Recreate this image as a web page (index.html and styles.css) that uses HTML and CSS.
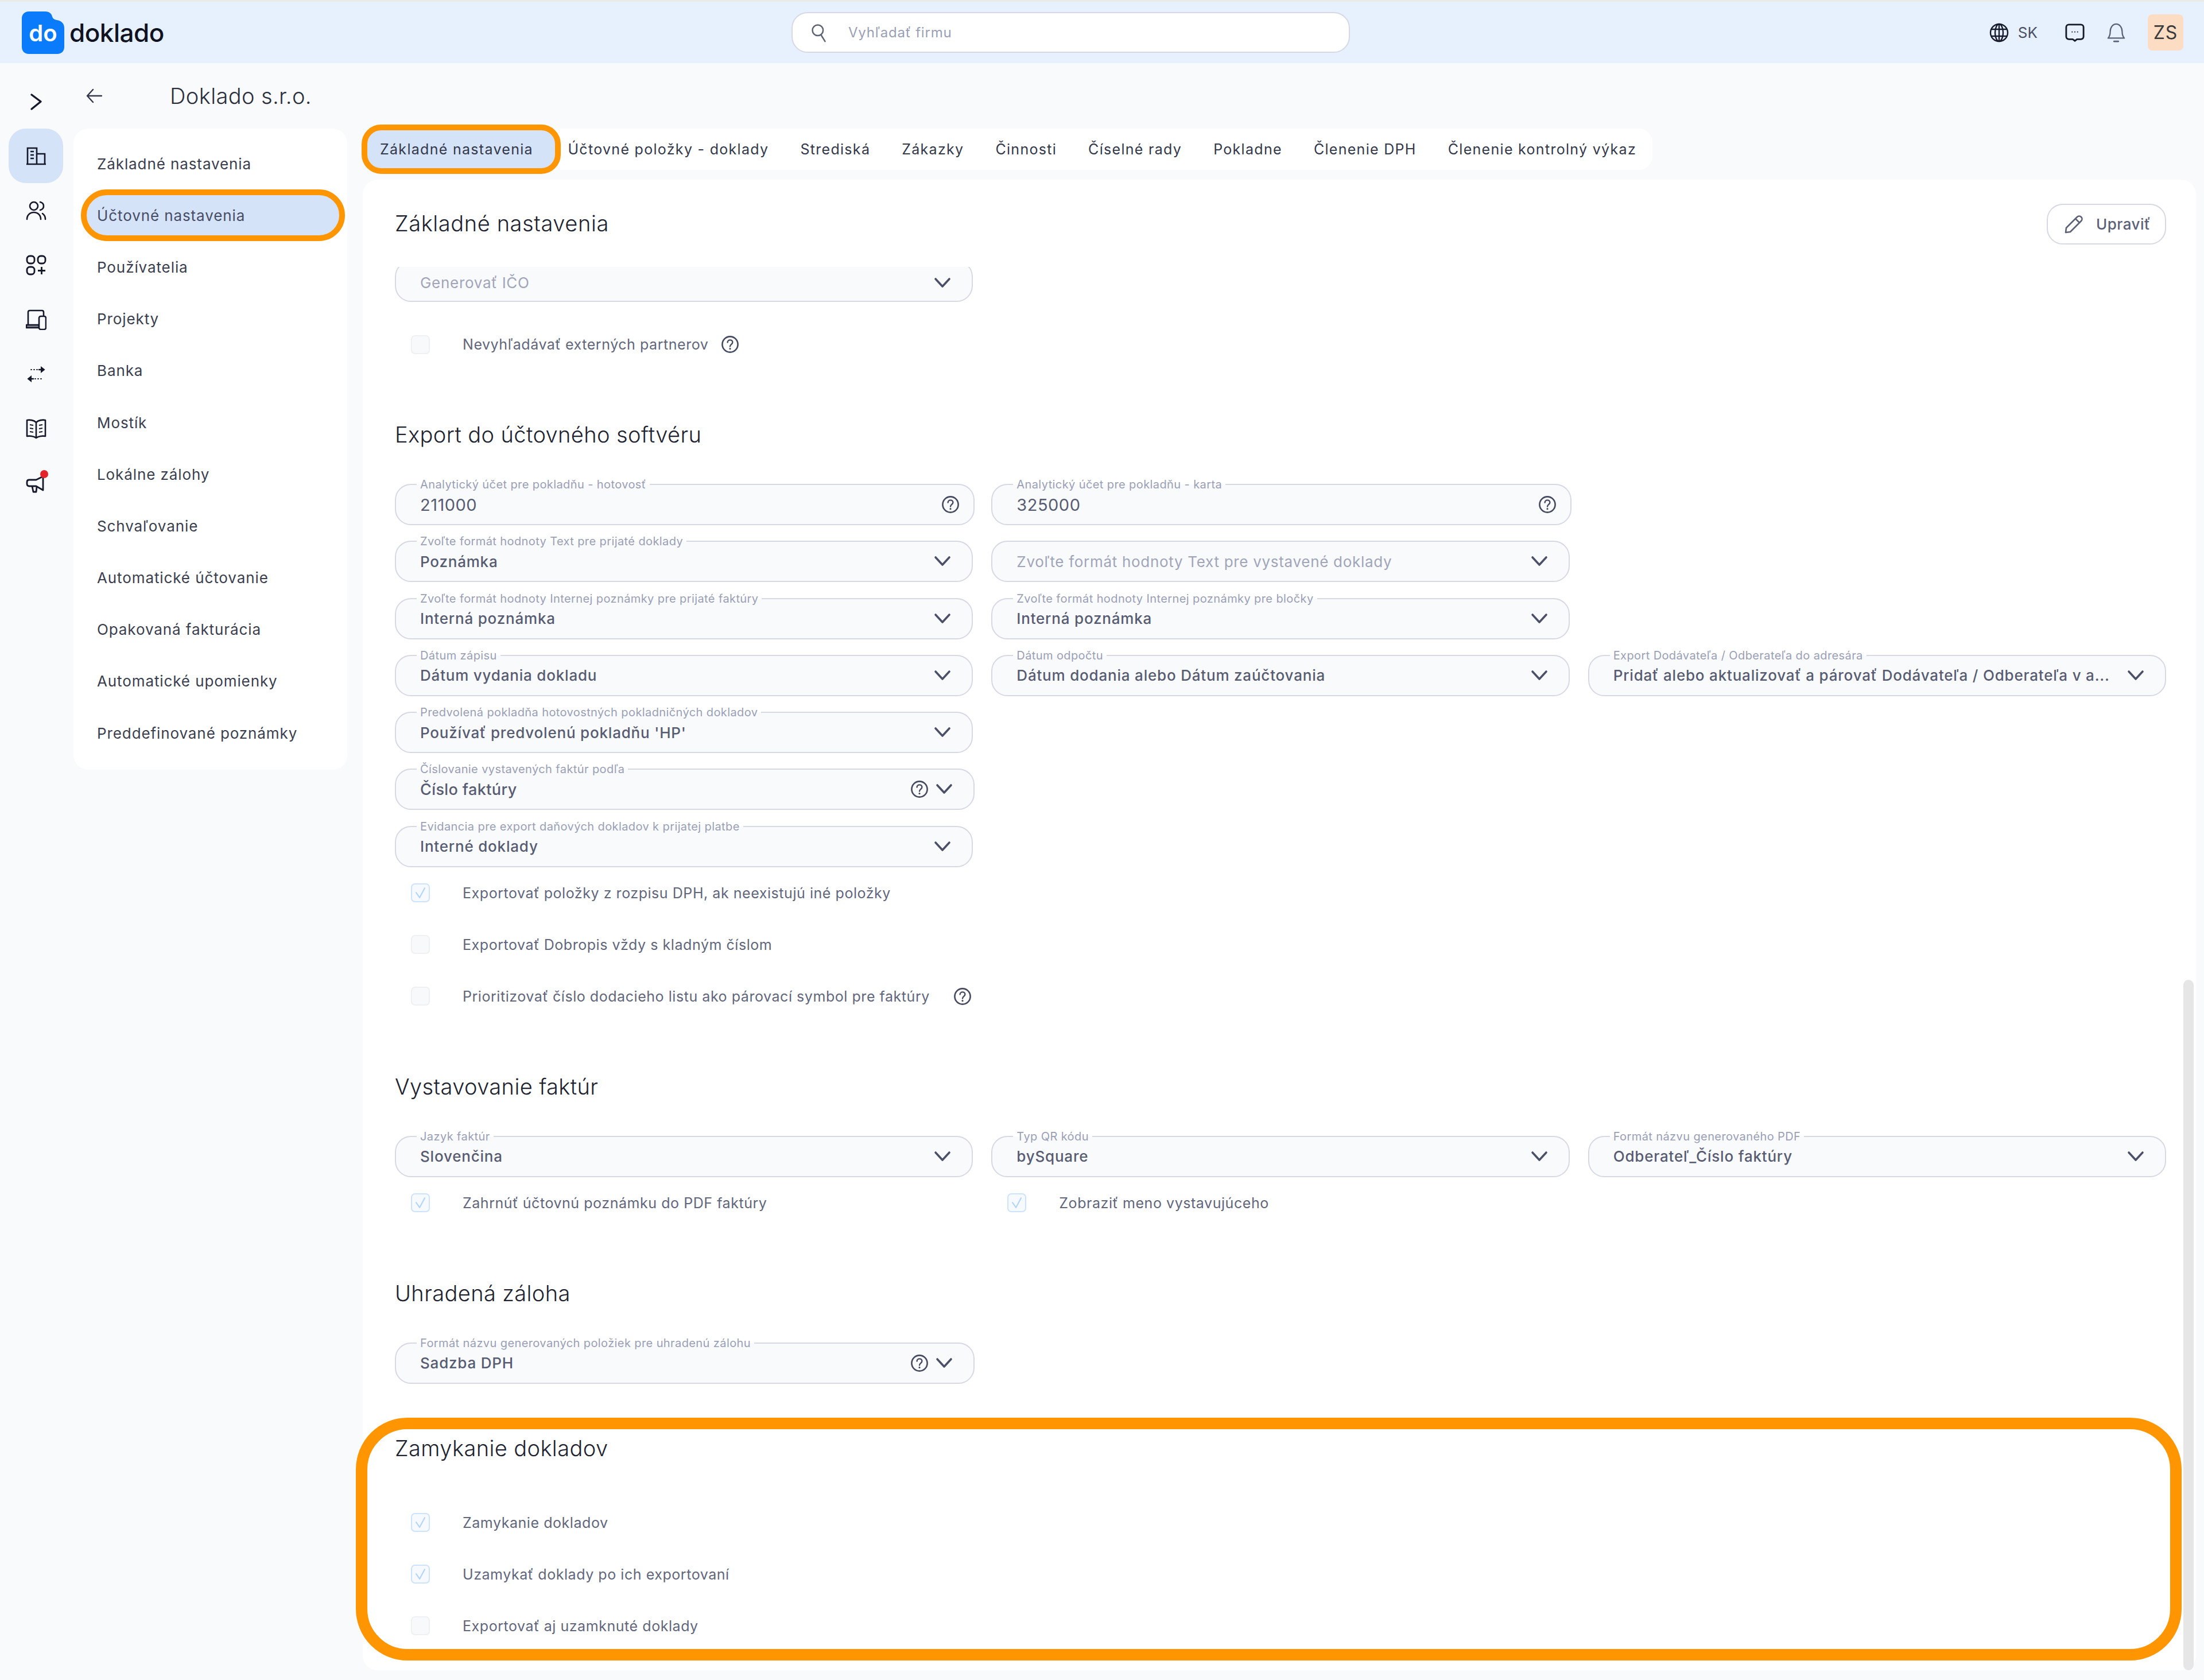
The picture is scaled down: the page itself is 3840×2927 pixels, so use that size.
FILE: index.html
```html
<!DOCTYPE html>
<html lang="sk">
<head>
  <meta charset="UTF-8">
  <title>Doklado - Účtovné nastavenia</title>
  <link rel="stylesheet" href="styles.css">
</head>
<body>
  <!-- icon sprite -->
  <svg class="sprite" xmlns="http://www.w3.org/2000/svg">
    <symbol id="i-chev" viewBox="0 0 30 20"><path d="M3 3l12 13L27 3" fill="none" stroke="currentColor" stroke-width="3.6" stroke-linecap="round" stroke-linejoin="round"/></symbol>
    <symbol id="i-help" viewBox="0 0 32 32"><circle cx="16" cy="16" r="13.6" fill="none" stroke="currentColor" stroke-width="2.6"/><path d="M11.6 12.6c0-2.6 2-4.2 4.4-4.2s4.4 1.6 4.4 3.9c0 3.5-4.4 3.6-4.4 7.3" fill="none" stroke="currentColor" stroke-width="2.4" stroke-linecap="round"/><circle cx="16" cy="23.6" r="1.6" fill="currentColor"/></symbol>
    <symbol id="i-check" viewBox="0 0 33 33"><path d="M8 16l7 10L25 7" fill="none" stroke="currentColor" stroke-width="2.4" stroke-linecap="round" stroke-linejoin="round"/></symbol>
  </svg>

  <header class="topbar">
    <div class="brand">
      <svg class="brand-mark" viewBox="0 0 74 74"><path d="M12 0h29c7 0 11 4 12 9 1 3 3 5 8 6 8 1 13 6 13 14v33c0 7-5 12-12 12H12C5 74 0 69 0 62V12C0 5 5 0 12 0z" fill="#0a7cfb"/><text x="37" y="52" text-anchor="middle" class="brand-do">do</text></svg>
      <span class="brand-name">doklado</span>
    </div>
    <div class="search">
      <svg class="search-icon" viewBox="0 0 32 40"><circle cx="14" cy="15" r="11" fill="none" stroke="currentColor" stroke-width="3"/><path d="M21 25l8 13" fill="none" stroke="currentColor" stroke-width="3" stroke-linecap="round"/></svg>
      <span>Vyhľadať firmu</span>
    </div>
    <div class="top-actions">
      <div class="lang">
        <svg class="top-icon" viewBox="0 0 34 34"><g fill="none" stroke="currentColor" stroke-width="2.4"><circle cx="17" cy="17" r="15"/><ellipse cx="17" cy="17" rx="7" ry="15"/><path d="M17 2v30M3.500 11h27M3.500 23h27"/></g></svg>
        <span>SK</span>
      </div>
      <svg class="top-icon chat" viewBox="0 0 36 34"><path d="M7 2h22c3 0 5 2 5 5v17c0 3-2 5-5 5h-7l-4 3-4-3H7c-3 0-5-2-5-5V7c0-3 2-5 5-5z" fill="none" stroke="currentColor" stroke-width="3"/><path d="M12 15.500h2M17 15.500h2M22 15.500h2" stroke="currentColor" stroke-width="2"/></svg>
      <svg class="top-icon bell" viewBox="0 0 34 36"><path d="M2 28c3-3 4-6 4-12 0-8 5-14 11-14s11 6 11 14c0 6 1 9 4 12z" fill="none" stroke="#5a6078" stroke-width="2.4" stroke-linejoin="round"/><path d="M13 34h8" stroke="#5a6078" stroke-width="3" stroke-linecap="round"/></svg>
      <div class="avatar">ZS</div>
    </div>
  </header>

  <div class="workspace">
    <nav class="rail">
      <div class="rail-item">
        <svg class="rail-icon" viewBox="0 0 36 36"><path d="M10 6l16 12-16 13" fill="none" stroke="currentColor" stroke-width="3.4" stroke-linecap="round" stroke-linejoin="round"/></svg>
      </div>
      <div class="rail-item active">
        <svg class="rail-icon" viewBox="0 0 36 36"><path d="M3 32V4h16v28M19 14h14v18M1 32h34M8 10h6M8 16h6M8 22h6" fill="none" stroke="currentColor" stroke-width="2.6"/></svg>
      </div>
      <div class="rail-item">
        <svg class="rail-icon" viewBox="0 0 36 36"><g fill="none" stroke="currentColor" stroke-width="2.6" stroke-linecap="round"><circle cx="14" cy="10" r="7"/><path d="M25 3c4 1 6 4 6 7s-2 6-6 7M2 33c0-7 5-12 12-12s12 5 12 12M29 23c3 2 5 6 5 10"/></g></svg>
      </div>
      <div class="rail-item">
        <svg class="rail-icon" viewBox="0 0 36 36"><g fill="none" stroke="currentColor" stroke-width="2.8"><rect x="2" y="2" width="13" height="13" rx="5"/><rect x="21" y="2" width="13" height="13" rx="5"/><rect x="2" y="21" width="13" height="13" rx="5"/><path d="M27.500 21v13M21 27.500h13"/></g></svg>
      </div>
      <div class="rail-item">
        <svg class="rail-icon" viewBox="0 0 36 36"><g fill="none" stroke="currentColor" stroke-width="2.6" stroke-linejoin="round"><path d="M4 26V5c0-2 1-3 3-3h21c2 0 3 1 3 3v6"/><path d="M1 27h22v5H1z" fill="currentColor" fill-opacity=".55"/><rect x="23" y="12" width="12" height="23" rx="3" fill="#f9fafc"/></g></svg>
      </div>
      <div class="rail-item">
        <svg class="rail-icon" viewBox="0 0 36 36"><g fill="none" stroke="currentColor" stroke-linecap="round"><path d="M9 10h1M14 10h1M19 10h1" stroke-width="1.800"/><path d="M23 10h5" stroke-width="2.400"/><path d="M27 6l5 4-5 4z" fill="currentColor" stroke-width="2"/><path d="M26 26h1M21 26h1M16 26h1" stroke-width="1.800"/><path d="M8 26h5" stroke-width="2.400"/><path d="M9 22l-5 4 5 4z" fill="currentColor" stroke-width="2"/></g></svg>
      </div>
      <div class="rail-item">
        <svg class="rail-icon" viewBox="0 0 36 36"><g fill="none" stroke="currentColor" stroke-width="2.6" stroke-linejoin="round"><path d="M18 7C14 3 7 2 2 3v28c5-1 12 0 16 3 4-3 11-4 16-3V3c-5-1-12 0-16 4zM18 7v27"/><path d="M7 11l6 1M7 17l6 1M7 23l6 1M29 11l-6 1M29 17l-6 1M29 23l-6 1" stroke-width="2.2"/></g></svg>
      </div>
      <div class="rail-item">
        <svg class="rail-icon" viewBox="0 0 36 36"><g fill="none" stroke="currentColor" stroke-width="2.8" stroke-linejoin="round"><path d="M30 6v24l-12-7H6c-3 0-4-2-4-4v-3c0-3 2-4 4-4h12z"/><path d="M11 23l2 10h5l1-9"/></g></svg>
        <span class="rail-dot"></span>
      </div>
    </nav>

    <div class="content">
      <div class="title-row">
        <svg class="back-icon" viewBox="0 0 28 26"><path d="M27 13H2M12 2L2 13l10 11" fill="none" stroke="currentColor" stroke-width="2.4" stroke-linecap="round" stroke-linejoin="round"/></svg>
        <h1 class="company">Doklado s.r.o.</h1>
      </div>

      <div class="content-body">
        <aside class="side-menu">
          <a class="side-item">Základné nastavenia</a>
          <a class="side-item selected">Účtovné nastavenia</a>
          <a class="side-item">Používatelia</a>
          <a class="side-item">Projekty</a>
          <a class="side-item">Banka</a>
          <a class="side-item">Mostík</a>
          <a class="side-item">Lokálne zálohy</a>
          <a class="side-item">Schvaľovanie</a>
          <a class="side-item">Automatické účtovanie</a>
          <a class="side-item">Opakovaná fakturácia</a>
          <a class="side-item">Automatické upomienky</a>
          <a class="side-item">Preddefinované poznámky</a>
        </aside>

        <main class="main">
          <div class="tabs">
            <a class="tab selected">Základné nastavenia</a>
            <a class="tab">Účtovné položky - doklady</a>
            <a class="tab">Strediská</a>
            <a class="tab">Zákazky</a>
            <a class="tab">Činnosti</a>
            <a class="tab">Číselné rady</a>
            <a class="tab">Pokladne</a>
            <a class="tab">Členenie DPH</a>
            <a class="tab">Členenie kontrolný výkaz</a>
          </div>

          <section class="panel">
            <div class="panel-head">
              <h2 class="section-title">Základné nastavenia</h2>
              <button class="edit-btn">
                <svg class="edit-icon" viewBox="0 0 34 34"><path d="M3 31l1-8L23 4c2-2 5-2 7 0s2 5 0 7L11 30z M20 7l7 7" fill="none" stroke="currentColor" stroke-width="2.6" stroke-linejoin="round"/></svg>
                Upraviť
              </button>
            </div>

            <div class="panel-scroll">
              <div class="field clipped"><span class="value muted">Generovať IČO</span><svg class="chev"><use href="#i-chev"/></svg></div>
              <div class="checks first">
                <div class="check-row"><span class="checkbox"></span><span>Nevyhľadávať externých partnerov</span><svg class="help"><use href="#i-help"/></svg></div>
              </div>

              <h2 class="section-title spaced">Export do účtovného softvéru</h2>
              <div class="field-grid">
                <div class="field wide help-only"><label>Analytický účet pre pokladňu - hotovosť</label><span class="value number">211000</span><svg class="help"><use href="#i-help"/></svg></div>
                <div class="field wide help-only"><label>Analytický účet pre pokladňu - karta</label><span class="value number">325000</span><svg class="help"><use href="#i-help"/></svg></div>
                <div class="field first-col"><label>Zvoľte formát hodnoty Text pre prijaté doklady</label><span class="value">Poznámka</span><svg class="chev"><use href="#i-chev"/></svg></div>
                <div class="field"><span class="value muted">Zvoľte formát hodnoty Text pre vystavené doklady</span><svg class="chev"><use href="#i-chev"/></svg></div>
                <div class="field first-col"><label>Zvoľte formát hodnoty Internej poznámky pre prijaté faktúry</label><span class="value">Interná poznámka</span><svg class="chev"><use href="#i-chev"/></svg></div>
                <div class="field"><label>Zvoľte formát hodnoty Internej poznámky pre bločky</label><span class="value">Interná poznámka</span><svg class="chev"><use href="#i-chev"/></svg></div>
                <div class="field first-col"><label>Dátum zápisu</label><span class="value">Dátum vydania dokladu</span><svg class="chev"><use href="#i-chev"/></svg></div>
                <div class="field"><label>Dátum odpočtu</label><span class="value">Dátum dodania alebo Dátum zaúčtovania</span><svg class="chev"><use href="#i-chev"/></svg></div>
                <div class="field"><label>Export Dodávateľa / Odberateľa do adresára</label><span class="value">Pridať alebo aktualizovať a párovať Dodávateľa / Odberateľa v a...</span><svg class="chev"><use href="#i-chev"/></svg></div>
                <div class="field first-col"><label>Predvolená pokladňa hotovostných pokladničných dokladov</label><span class="value">Používať predvolenú pokladňu 'HP'</span><svg class="chev"><use href="#i-chev"/></svg></div>
                <div class="field first-col wide"><label>Číslovanie vystavených faktúr podľa</label><span class="value mid">Číslo faktúry</span><svg class="help"><use href="#i-help"/></svg><svg class="chev"><use href="#i-chev"/></svg></div>
                <div class="field first-col"><label>Evidancia pre export daňových dokladov k prijatej platbe</label><span class="value">Interné doklady</span><svg class="chev"><use href="#i-chev"/></svg></div>
              </div>
              <div class="checks">
                <div class="check-row"><span class="checkbox on"><svg><use href="#i-check"/></svg></span><span>Exportovať položky z rozpisu DPH, ak neexistujú iné položky</span></div>
                <div class="check-row"><span class="checkbox"></span><span>Exportovať Dobropis vždy s kladným číslom</span></div>
                <div class="check-row"><span class="checkbox"></span><span>Prioritizovať číslo dodacieho listu ako párovací symbol pre faktúry</span><svg class="help far"><use href="#i-help"/></svg></div>
              </div>

              <h2 class="section-title spaced">Vystavovanie faktúr</h2>
              <div class="field-grid">
                <div class="field"><label>Jazyk faktúr</label><span class="value">Slovenčina</span><svg class="chev"><use href="#i-chev"/></svg></div>
                <div class="field"><label>Typ QR kódu</label><span class="value">bySquare</span><svg class="chev"><use href="#i-chev"/></svg></div>
                <div class="field"><label>Formát názvu generovaného PDF</label><span class="value">Odberateľ_Číslo faktúry</span><svg class="chev"><use href="#i-chev"/></svg></div>
              </div>
              <div class="field-grid tight">
                <div class="check-row"><span class="checkbox on"><svg><use href="#i-check"/></svg></span><span>Zahrnúť účtovnú poznámku do PDF faktúry</span></div>
                <div class="check-row"><span class="checkbox on"><svg><use href="#i-check"/></svg></span><span>Zobraziť meno vystavujúceho</span></div>
              </div>

              <h2 class="section-title spaced">Uhradená záloha</h2>
              <div class="field-grid">
                <div class="field wide"><label>Formát názvu generovaných položiek pre uhradenú zálohu</label><span class="value">Sadzba DPH</span><svg class="help"><use href="#i-help"/></svg><svg class="chev"><use href="#i-chev"/></svg></div>
              </div>

              <div class="lock-section">
                <h2 class="section-title">Zamykanie dokladov</h2>
                <div class="checks lock-checks">
                  <div class="check-row"><span class="checkbox on"><svg><use href="#i-check"/></svg></span><span>Zamykanie dokladov</span></div>
                  <div class="check-row"><span class="checkbox on"><svg><use href="#i-check"/></svg></span><span>Uzamykať doklady po ich exportovaní</span></div>
                  <div class="check-row"><span class="checkbox"></span><span>Exportovať aj uzamknuté doklady</span></div>
                </div>
              </div>
            </div>

            <div class="scroll-thumb"></div>
          </section>
        </main>
      </div>
    </div>
  </div>
</body>
</html>
```
FILE: styles.css
```css
* {
  box-sizing: border-box;
}

body {
  margin: 0;
  width: 3840px;
  height: 2927px;
  overflow: hidden;
  font-family: 'Inter', 'Liberation Sans', sans-serif;
  background: #f9fafc;
  color: #33384a;
}

.sprite {
  display: none;
}

/* top bar */
.topbar {
  height: 110px;
  background: #e6f1fd;
  border-top: 3px solid #e9ebe6;
  display: flex;
  align-items: center;
  position: relative;
}

.brand {
  display: flex;
  align-items: center;
  margin-left: 38px;
  gap: 9px;
}

.brand-mark {
  width: 74px;
  height: 74px;
}

.brand-do {
  fill: #fff;
  font-family: 'Inter', sans-serif;
  font-size: 40px;
  font-weight: 600;
}

.brand-name {
  font-size: 44px;
  font-weight: 500;
  color: #10131f;
  letter-spacing: -0.5px;
}

.search {
  position: absolute;
  left: 1379px;
  top: 18px;
  width: 973px;
  height: 71px;
  background: #fff;
  border: 2px solid #d6d9e3;
  border-radius: 28px;
  display: flex;
  align-items: center;
  padding-left: 32px;
  gap: 38px;
  font-size: 24px;
  letter-spacing: 0.8px;
  color: #9a9fb5;
}

.search-icon {
  width: 27px;
  height: 34px;
  color: #5d6275;
}

.top-actions {
  margin-left: auto;
  margin-right: 36px;
  display: flex;
  align-items: center;
}

.lang {
  display: flex;
  align-items: center;
  gap: 16px;
  font-size: 26px;
  color: #4a4f63;
  margin-right: 48px;
}

.top-icon {
  width: 34px;
  height: 34px;
  color: #16192a;
}

.bell {
  margin-left: 38px;
  margin-right: 38px;
}

.avatar {
  width: 62px;
  height: 63px;
  background: #fddcc4;
  border-radius: 8px;
  display: flex;
  align-items: center;
  justify-content: center;
  font-size: 32px;
  color: #3a3a3a;
  letter-spacing: 1px;
}

/* main layout */
.workspace {
  display: flex;
  height: 2817px;
}

.rail {
  width: 128px;
  padding: 19px 0 0 15px;
  flex-shrink: 0;
}

.rail-item {
  width: 95px;
  height: 95px;
  border-radius: 30px;
  display: flex;
  align-items: center;
  justify-content: center;
  position: relative;
  color: #15182a;
}

.rail-item.active {
  background: #d5e3f9;
}

.rail-icon {
  width: 36px;
  height: 36px;
}

.rail-dot {
  position: absolute;
  top: 25px;
  right: 26px;
  width: 14px;
  height: 14px;
  border-radius: 50%;
  background: #e3242b;
}

.content {
  flex: 1;
  display: flex;
  flex-direction: column;
  padding-right: 14px;
}

.title-row {
  height: 114px;
  display: flex;
  align-items: center;
}

.back-icon {
  width: 28px;
  height: 26px;
  margin-left: 22px;
  margin-right: 118px;
  color: #33384a;
}

.company {
  margin: 0;
  font-size: 38px;
  font-weight: 300;
  color: #2a2e3d;
  letter-spacing: 0.4px;
}

.content-body {
  display: flex;
  gap: 27px;
  align-items: flex-start;
}

/* left menu */
.side-menu {
  width: 477px;
  height: 1117px;
  background: #fff;
  border-radius: 26px;
  padding: 16px 4px 0 13px;
  display: flex;
  flex-direction: column;
  flex-shrink: 0;
}

.side-item {
  height: 90.200px;
  display: flex;
  align-items: center;
  padding-left: 28px;
  font-size: 26px;
  letter-spacing: 0.9px;
  color: #3a3e4e;
  border-radius: 45px;
}

.side-item.selected {
  background: #d5e3f9;
  border: 10px solid #ff9500;
  padding-left: 18px;
  color: #464c66;
}

.main {
  flex: 1;
  display: flex;
  flex-direction: column;
  min-width: 0;
}

/* tabs */
.tabs {
  align-self: flex-start;
  height: 72px;
  background: #fff;
  border-radius: 24px;
  display: flex;
  align-items: center;
}

.tab {
  padding: 0 27.500px;
  font-size: 25px;
  letter-spacing: 1.3px;
  color: #33384a;
  white-space: nowrap;
}

.tab.selected {
  margin-left: -2px;
  height: 86px;
  padding: 0 38px 0 22px;
  margin-right: -15px;
  display: flex;
  align-items: center;
  background: #d5e3f9;
  border: 10px solid #ff9500;
  border-radius: 34px;
}

/* settings panel */
.panel {
  margin-top: 17px;
  height: 2597px;
  background: #fff;
  border-radius: 26px;
  position: relative;
  display: flex;
  flex-direction: column;
}

.panel-head {
  height: 152px;
  padding: 42px 52px 0 56px;
  background: #fff;
  border-radius: 26px 26px 0 0;
  display: flex;
  align-items: flex-start;
  justify-content: space-between;
  position: relative;
  z-index: 1;
}

.panel-head .section-title {
  margin-top: 9px;
  letter-spacing: 0.6px;
}

.section-title {
  margin: 0;
  height: 50px;
  line-height: 50px;
  font-size: 38px;
  font-weight: 300;
  letter-spacing: 0.4px;
  color: #20232f;
}

.section-title.spaced {
  margin-top: 87px;
}

.edit-btn {
  width: 208px;
  height: 71px;
  border: 2px solid #d6d9e3;
  border-radius: 28px;
  background: #fff;
  display: flex;
  align-items: center;
  gap: 22px;
  padding: 0 0 0 28px;
  font-family: inherit;
  font-size: 26px;
  font-weight: 500;
  color: #5c6177;
  letter-spacing: 0.5px;
}

.edit-icon {
  width: 34px;
  height: 34px;
}

.panel-scroll {
  margin-top: -11px;
  padding: 0 52px 0 56px;
}

.scroll-thumb {
  position: absolute;
  right: 4px;
  top: 1394px;
  bottom: 0;
  width: 18px;
  background: #e6e6e6;
  border-radius: 9px;
}

/* fields */
.field-grid {
  display: grid;
  grid-template-columns: repeat(3, 1fr);
  column-gap: 32px;
  row-gap: 27.300px;
  margin-top: 61px;
}

.field-grid.tight {
  margin-top: 0;
}

.field {
  height: 72px;
  background: #f9fafc;
  border: 2px solid #d6d9e3;
  border-radius: 28px;
  display: flex;
  align-items: center;
  gap: 12px;
  padding: 0 36px 0 42px;
  position: relative;
  color: #4b5068;
}

.field.clipped {
  width: 1007px;
  padding-top: 5px;
}

.field.first-col {
  grid-column: 1;
}

.field.wide {
  margin-right: -3px;
}

.field.help-only {
  padding-right: 24px;
}

.field label {
  position: absolute;
  left: 36px;
  top: -13px;
  padding: 0 6px;
  font-size: 20px;
  line-height: 24px;
  letter-spacing: 0.4px;
  color: #9a9fb5;
  white-space: nowrap;
  background: linear-gradient(#fff 50%, #f9fafc 50%);
}

.value {
  flex: 1;
  font-size: 26px;
  font-weight: 500;
  letter-spacing: 0.8px;
  color: #575c72;
  white-space: nowrap;
  overflow: hidden;
}

.value.number {
  font-size: 29px;
  font-weight: 400;
  letter-spacing: 0.5px;
}

.value.mid {
  font-size: 27px;
  letter-spacing: 0.4px;
}

.value.muted {
  color: #a0a5b9;
  font-weight: 400;
  letter-spacing: 0.7px;
}

.chev {
  width: 30px;
  height: 20px;
  flex-shrink: 0;
  color: #4b5068;
}

.help {
  width: 32px;
  height: 32px;
  flex-shrink: 0;
  color: #454a60;
}

/* checkboxes */
.first {
  margin-top: 29px;
}

.check-row {
  height: 90px;
  display: flex;
  align-items: center;
  padding-left: 28px;
  font-size: 25px;
  letter-spacing: 0.55px;
  color: #61667c;
}

.check-row .help {
  margin-left: 22px;
}

.check-row .help.far {
  margin-left: 41px;
}

.checkbox {
  width: 33px;
  height: 33px;
  margin-right: 57px;
  border: 2px solid #eef0f4;
  border-radius: 7px;
  background: #f8f9fb;
  flex-shrink: 0;
}

.checkbox.on {
  border-color: #cde2fd;
  background: #f6faff;
  color: #b2d4fb;
}

.checkbox svg {
  display: block;
  width: 29px;
  height: 29px;
}

/* highlighted section */
.lock-section {
  margin-top: 87px;
  position: relative;
}

.lock-section::after {
  content: "";
  position: absolute;
  top: -28px;
  left: -68px;
  right: -27px;
  bottom: -15px;
  border: 20px solid #ff9500;
  border-radius: 90px;
  pointer-events: none;
}

.lock-checks {
  margin-top: 60px;
}
```
